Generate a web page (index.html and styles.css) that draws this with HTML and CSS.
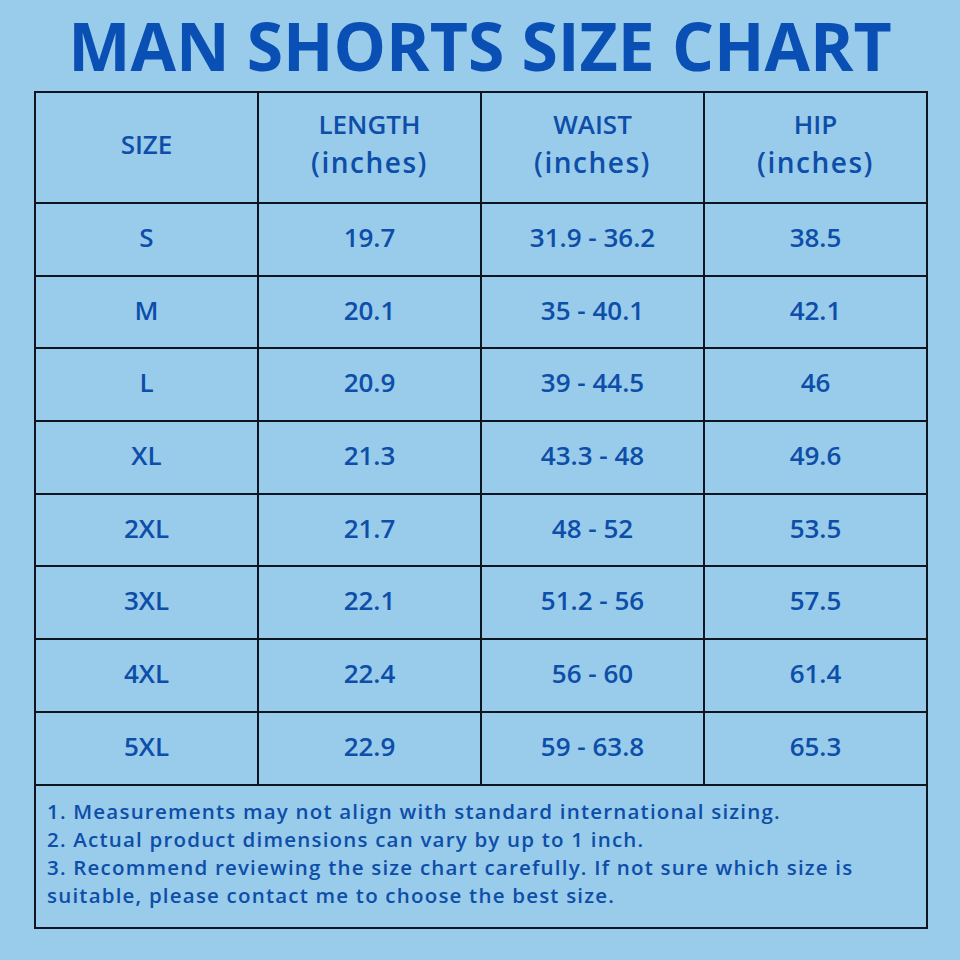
FILE: index.html
```html
<!DOCTYPE html>
<html lang="en">
<head>
    <meta charset="UTF-8">
    <meta name="viewport" content="width=device-width, initial-scale=1.0">
    <title>Man Shorts Size Chart</title>
    <link rel="stylesheet" href="styles.css">
</head>
<body>
    <div class="chart">
        <h1 class="title">MAN SHORTS SIZE CHART</h1>
        <table class="sizes">
            <thead>
                <tr>
                    <th>SIZE</th>
                    <th>LENGTH<br><span class="unit">(inches)</span></th>
                    <th>WAIST<br><span class="unit">(inches)</span></th>
                    <th>HIP<br><span class="unit">(inches)</span></th>
                </tr>
            </thead>
            <tbody>
                <tr><td>S</td><td>19.7</td><td>31.9 - 36.2</td><td>38.5</td></tr>
                <tr><td>M</td><td>20.1</td><td>35 - 40.1</td><td>42.1</td></tr>
                <tr><td>L</td><td>20.9</td><td>39 - 44.5</td><td>46</td></tr>
                <tr><td>XL</td><td>21.3</td><td>43.3 - 48</td><td>49.6</td></tr>
                <tr><td>2XL</td><td>21.7</td><td>48 - 52</td><td>53.5</td></tr>
                <tr><td>3XL</td><td>22.1</td><td>51.2 - 56</td><td>57.5</td></tr>
                <tr><td>4XL</td><td>22.4</td><td>56 - 60</td><td>61.4</td></tr>
                <tr><td>5XL</td><td>22.9</td><td>59 - 63.8</td><td>65.3</td></tr>
                <tr>
                    <td class="notes" colspan="4">
                        1. Measurements may not align with standard international sizing.<br>
                        2. Actual product dimensions can vary by up to 1 inch.<br>
                        3. Recommend reviewing the size chart carefully. If not sure which size is<br>
                        suitable, please contact me to choose the best size.
                    </td>
                </tr>
            </tbody>
        </table>
    </div>
</body>
</html>
```

FILE: styles.css
```css
* {
    box-sizing: border-box;
    margin: 0;
    padding: 0;
}
body {
    background-color: #99cbeb;
    font-family: "Open Sans", Lato, sans-serif;
    color: #0d4ea8;
}
.chart {
    width: 960px;
    height: 960px;
}
.title {
    font-family: "Open Sans", sans-serif;
    font-weight: 700;
    font-size: 66px;
    line-height: 90px;
    text-align: center;
    color: #0a4fb3;
    height: 91px;
}
.sizes {
    margin-left: 34px;
    width: 894px;
    border-collapse: collapse;
    table-layout: fixed;
}
.sizes th, .sizes td {
    border: 2.5px solid #0f1520;
    text-align: center;
    vertical-align: middle;
}
.sizes th {
    height: 111px;
    padding-bottom: 8px;
    font-size: 26px;
    font-weight: 600;
    line-height: 38px;
}
.sizes th .unit {
    font-size: 28px;
    font-weight: 600;
    letter-spacing: 1.5px;
}
.sizes td {
    height: 72.7px;
    padding-bottom: 5px;
    font-size: 26px;
    font-weight: 600;
}
.sizes td.notes {
    height: 143px;
    text-align: left;
    vertical-align: top;
    padding: 11px 11px;
    font-size: 20.5px;
    line-height: 28px;
    font-weight: 600;
    letter-spacing: 1.2px;
}
```
